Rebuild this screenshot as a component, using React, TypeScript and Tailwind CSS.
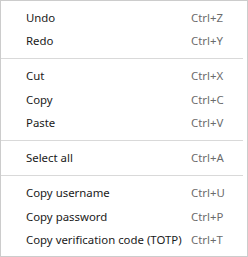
type Item = { label: string; shortcut: string } | "sep";

const items: Item[] = [
  { label: "Undo", shortcut: "Ctrl+Z" },
  { label: "Redo", shortcut: "Ctrl+Y" },
  "sep",
  { label: "Cut", shortcut: "Ctrl+X" },
  { label: "Copy", shortcut: "Ctrl+C" },
  { label: "Paste", shortcut: "Ctrl+V" },
  "sep",
  { label: "Select all", shortcut: "Ctrl+A" },
  "sep",
  { label: "Copy username", shortcut: "Ctrl+U" },
  { label: "Copy password", shortcut: "Ctrl+P" },
  { label: "Copy verification code (TOTP)", shortcut: "Ctrl+T" },
];

export default function App() {
  return (
    <div
      className="flex h-[257px] w-[248px] flex-col border border-[#cccccc] bg-white py-[5px] text-[11.4px] antialiased"
      style={{ fontFamily: '"Segoe UI", "Noto Sans", "Open Sans", sans-serif' }}
    >
      {items.map((item, i) =>
        item === "sep" ? (
          <div key={i} className="flex h-[12px] items-center">
            <div className="mr-[4px] h-px flex-1 bg-[#d9d9d9]" />
          </div>
        ) : (
          <div key={i} className="flex h-[23.25px] items-center pl-[25px]">
            <span className="w-[165px] whitespace-nowrap text-[#1a1a1a]">{item.label}</span>
            <span className="whitespace-nowrap text-[#6b6b6b]">{item.shortcut}</span>
          </div>
        )
      )}
    </div>
  );
}
